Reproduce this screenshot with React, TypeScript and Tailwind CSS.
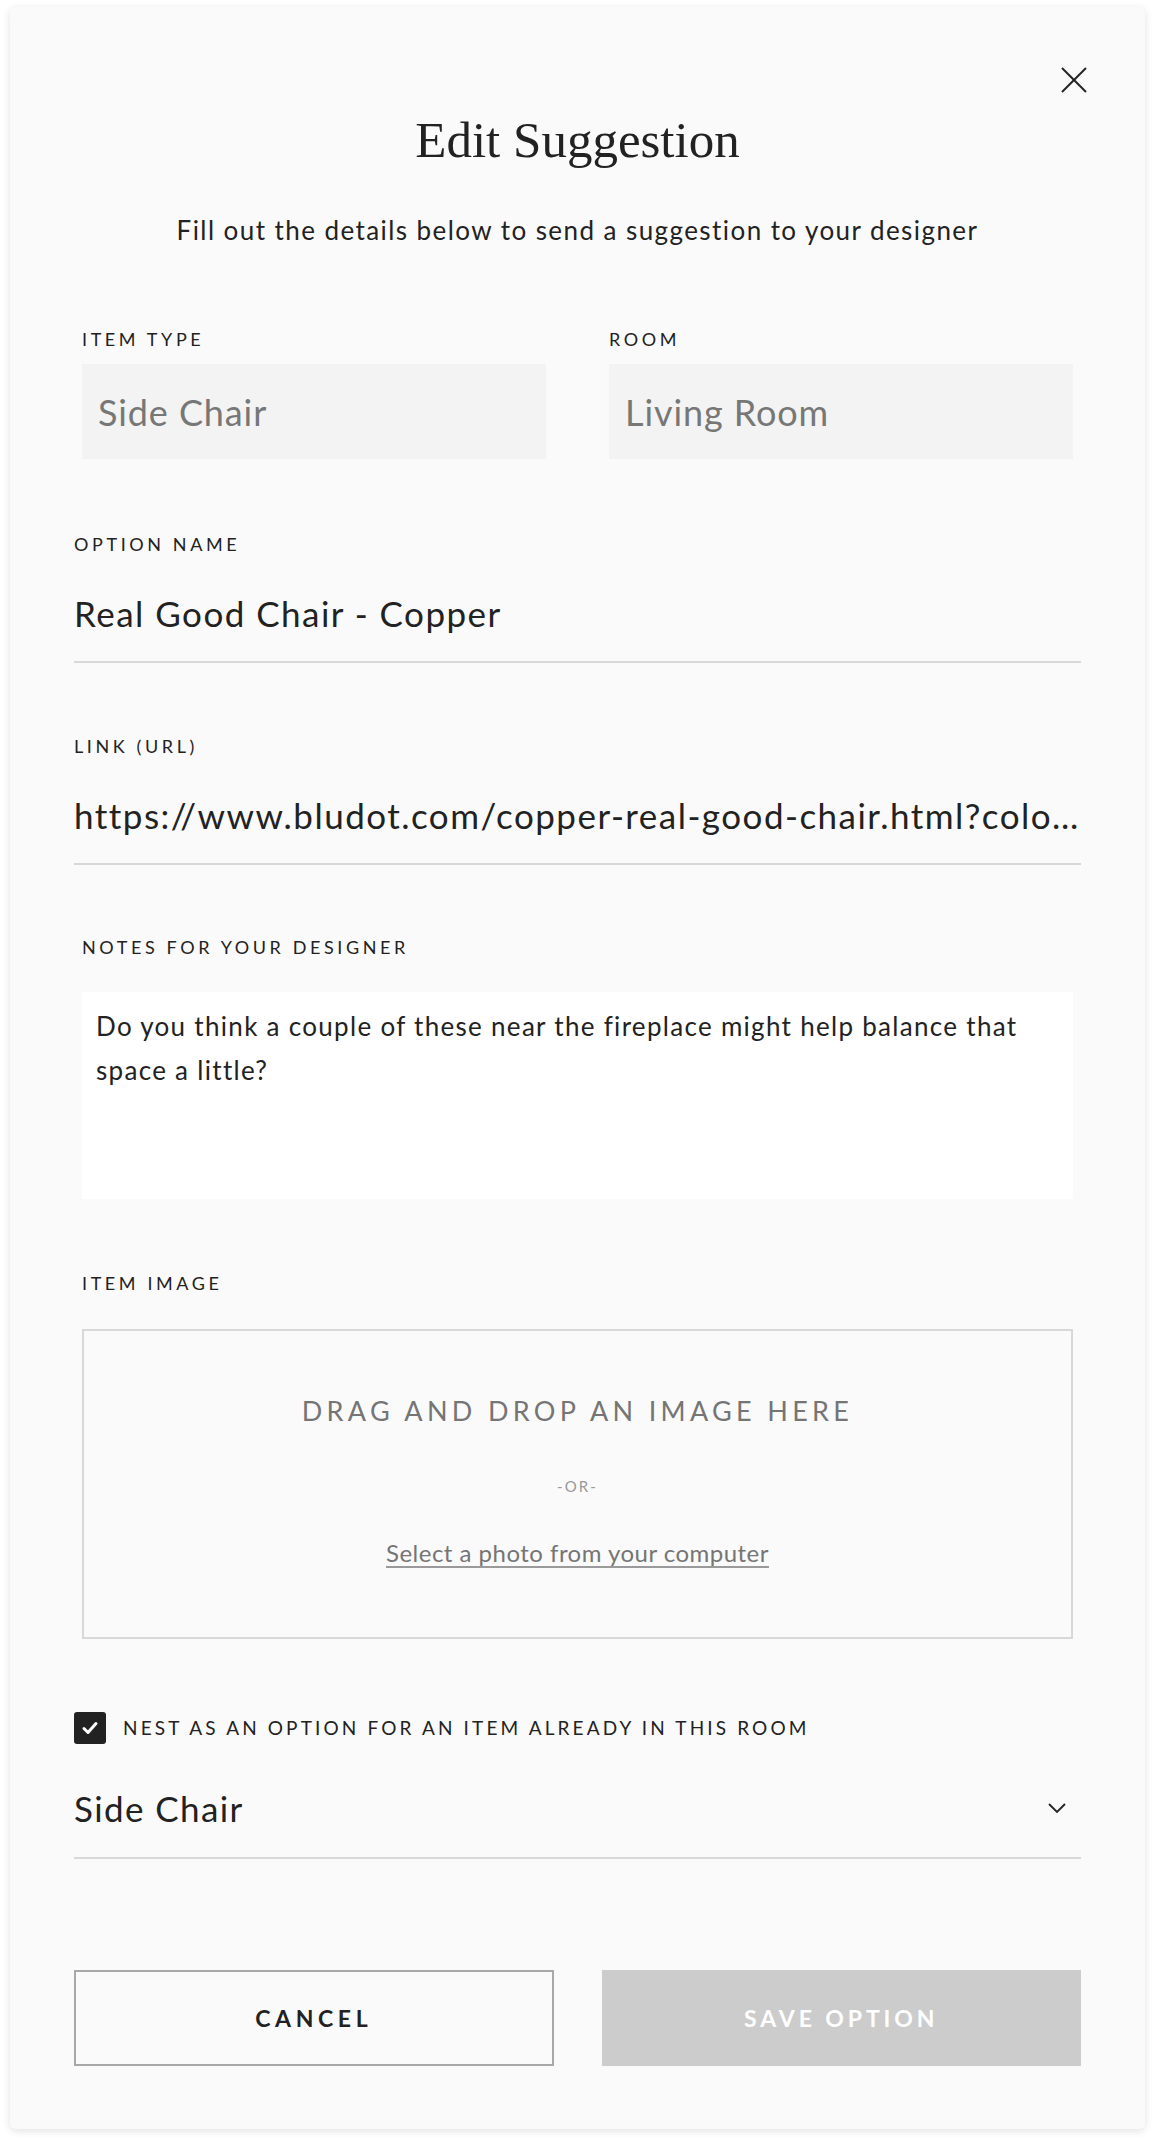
import React from "react";

const sans = "font-['Lato',sans-serif]";

function Label({ children, className = "" }: { children: React.ReactNode; className?: string }) {
  return (
    <div className={`${sans} text-[18px] leading-[24px] tracking-[0.2em] text-[#222] uppercase ${className}`}>
      {children}
    </div>
  );
}

export default function App() {
  return (
    <div className="min-h-[2142px] bg-white pt-[7px] pl-[10px]">
      <div className="relative w-[1135px] rounded-md bg-[#fafafa] shadow-[0_2px_8px_rgba(0,0,0,0.12)] px-[64px] pb-[63px]">
        <button className="absolute top-[60px] right-[58px] w-[26px] h-[26px]" aria-label="Close">
          <svg width="26" height="26" viewBox="0 0 26 26" fill="none" stroke="#222" strokeWidth="2">
            <line x1="1" y1="1" x2="25" y2="25" />
            <line x1="25" y1="1" x2="1" y2="25" />
          </svg>
        </button>

        <h1 className="pt-[108px] text-center font-['Liberation_Serif',serif] text-[51px] leading-[50px] text-[#222]">
          Edit Suggestion
        </h1>
        <p className={`${sans} mt-[49px] text-center text-[26px] leading-[32px] tracking-[0.055em] text-[#222]`}>
          Fill out the details below to send a suggestion to your designer
        </p>

        <div className="mt-[81px] grid grid-cols-2 gap-x-[63px] px-[8px]">
          <div>
            <Label>Item Type</Label>
            <div className={`${sans} mt-[13px] h-[95px] bg-[#f3f3f3] flex items-center pl-[16px] text-[36px] leading-[44px] tracking-[0.025em] text-[#777]`}>
              Side Chair
            </div>
          </div>
          <div>
            <Label>Room</Label>
            <div className={`${sans} mt-[13px] h-[95px] bg-[#f3f3f3] flex items-center pl-[16px] text-[36px] leading-[44px] tracking-[0.025em] text-[#777]`}>
              Living Room
            </div>
          </div>
        </div>

        <div className="mt-[73px]">
          <Label>Option Name</Label>
          <div className={`${sans} mt-[35px] pb-[26px] border-b-2 border-[#d8d8d8] text-[35px] leading-[44px] tracking-[0.042em] text-[#222]`}>
            Real Good Chair - Copper
          </div>
        </div>

        <div className="mt-[71px]">
          <Label>Link (URL)</Label>
          <div className={`${sans} mt-[35px] pb-[26px] border-b-2 border-[#d8d8d8] text-[35px] leading-[44px] tracking-[0.042em] text-[#222] truncate`}>
            https://www.bludot.com/copper-real-good-chair.html?color=copper&amp;size=standard
          </div>
        </div>

        <div className="mt-[70px] px-[8px]">
          <Label>Notes for your designer</Label>
          <div className={`${sans} mt-[33px] h-[207px] bg-white pl-[14px] pr-[20px] pt-[12px] text-[26px] leading-[44px] tracking-[0.05em] text-[#222]`}>
            Do you think a couple of these near the fireplace might help balance that space a little?
          </div>
        </div>

        <div className="mt-[72px] px-[8px]">
          <Label>Item Image</Label>
          <div className="mt-[34px] h-[310px] border-2 border-[#d8d8d8] flex flex-col items-center">
            <div className={`${sans} mt-[64px] text-[27px] leading-[32px] tracking-[0.16em] text-[#757575]`}>
              DRAG AND DROP AN IMAGE HERE
            </div>
            <div className={`${sans} mt-[49px] text-[15px] leading-[20px] tracking-[0.14em] text-[#999]`}>-OR-</div>
            <div className={`${sans} mt-[41px] text-[24px] leading-[32px] tracking-[0.02em] text-[#757575] underline underline-offset-[4px] decoration-[#9a9a9a]`}>
              Select a photo from your computer
            </div>
          </div>
        </div>

        <div className="mt-[73px] flex items-center gap-[17px]">
          <div className="w-[32px] h-[32px] rounded-[3px] bg-[#222] flex items-center justify-center">
            <svg width="20" height="20" viewBox="0 0 20 20" fill="none" stroke="white" strokeWidth="3" strokeLinecap="round" strokeLinejoin="round">
              <polyline points="4,10.5 8,14.5 16,5.5" />
            </svg>
          </div>
          <div className={`${sans} text-[19px] leading-[32px] tracking-[0.165em] text-[#222]`}>
            NEST AS AN OPTION FOR AN ITEM ALREADY IN THIS ROOM
          </div>
        </div>

        <div className={`${sans} mt-[42px] pb-[27px] border-b-2 border-[#d8d8d8] flex items-center justify-between text-[35px] leading-[44px] tracking-[0.04em] text-[#222]`}>
          <span>Side Chair</span>
          <svg className="mr-[14px]" width="20" height="12" viewBox="0 0 20 12" fill="none" stroke="#222" strokeWidth="1.8">
            <polyline points="2,2 10,10 18,2" />
          </svg>
        </div>

        <div className="mt-[111px] grid grid-cols-2 gap-x-[48px]">
          <button className={`${sans} h-[96px] border-2 border-[#a8a8a8] font-bold text-[23px] tracking-[0.2em] text-[#222]`}>
            CANCEL
          </button>
          <button className={`${sans} h-[96px] bg-[#cccccc] font-bold text-[23px] tracking-[0.17em] text-white`}>
            SAVE OPTION
          </button>
        </div>
      </div>
    </div>
  );
}
